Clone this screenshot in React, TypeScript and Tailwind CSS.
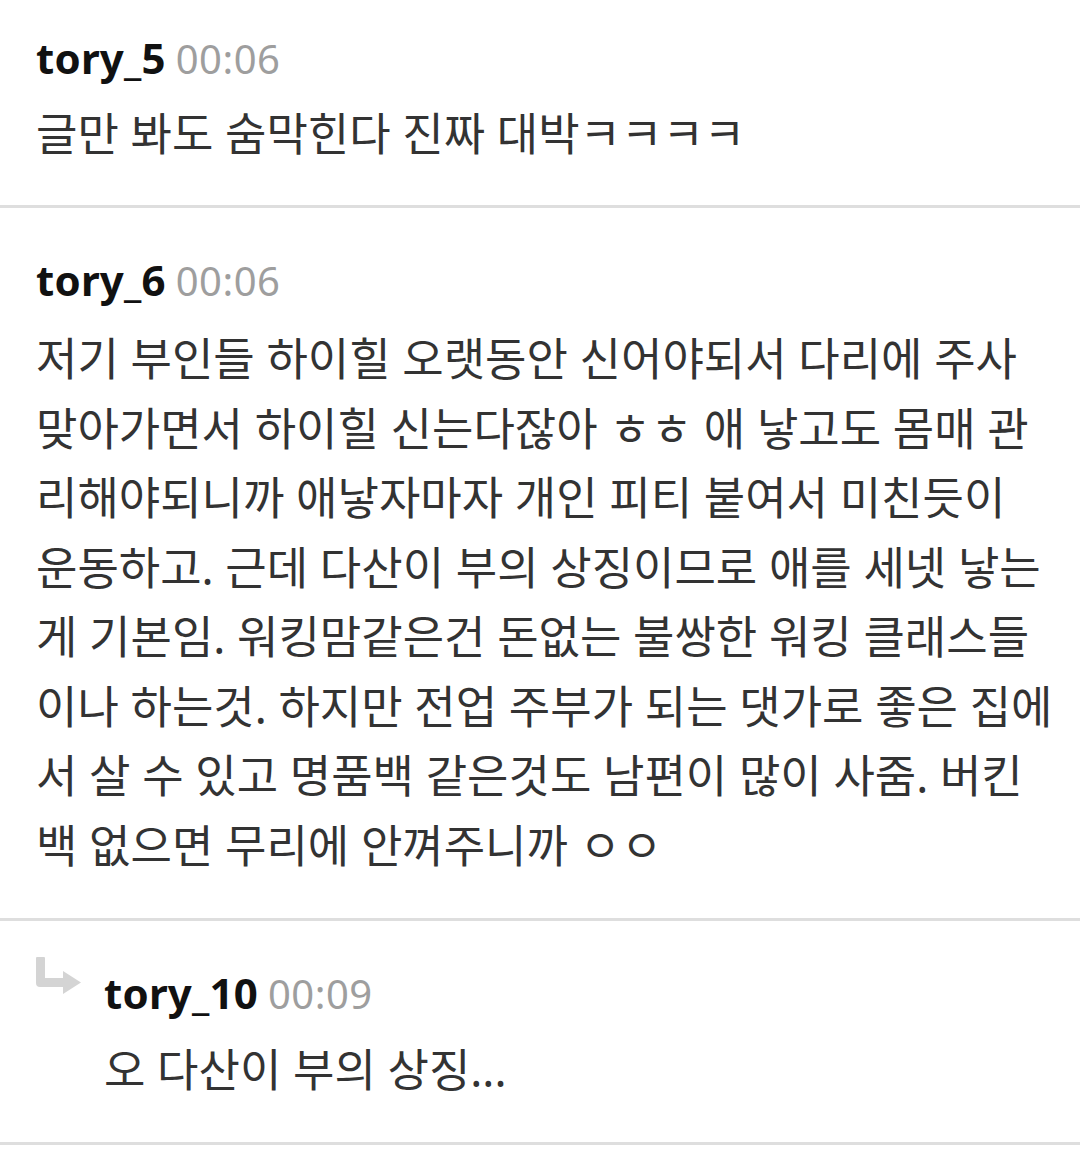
const font = { fontFamily: '"Noto Sans", "Noto Sans CJK KR", sans-serif' };

const longLines = [
  "저기 부인들 하이힐 오랫동안 신어야되서 다리에 주사",
  "맞아가면서 하이힐 신는다잖아 ㅎㅎ 애 낳고도 몸매 관",
  "리해야되니까 애낳자마자 개인 피티 붙여서 미친듯이",
  "운동하고. 근데 다산이 부의 상징이므로 애를 세넷 낳는",
  "게 기본임. 워킹맘같은건 돈없는 불쌍한 워킹 클래스들",
  "이나 하는것. 하지만 전업 주부가 되는 댓가로 좋은 집에",
  "서 살 수 있고 명품백 같은것도 남편이 많이 사줌. 버킨",
  "백 없으면 무리에 안껴주니까 ㅇㅇ",
];

function Header({ name, time }: { name: string; time: string }) {
  return (
    <div className="flex items-baseline gap-[10px] h-[56px] leading-[56px]">
      <span className="text-[42px] font-bold text-[#111] tracking-[0.2px]">{name}</span>
      <span className="text-[40px] text-[#9e9e9e] tracking-[0.5px]">{time}</span>
    </div>
  );
}

function ReplyArrow() {
  return (
    <svg width="46" height="38" viewBox="0 0 46 38" className="shrink-0 mt-[-8px]">
      <path d="M1 0h7a1 1 0 0 1 1 1V21h19v9H4a4 4 0 0 1-4-4V1a1 1 0 0 1 1-1z" fill="#d4d4d4" />
      <path d="M27 14l18 11.5L27 37z" fill="#d4d4d4" />
    </svg>
  );
}

export default function App() {
  return (
    <div className="w-[1080px] min-h-[1149px] bg-white" style={font}>
      <div className="pl-[36px] pt-[30px] pb-[36px] border-b-[3px] border-[#dedede]">
        <Header name="tory_5" time="00:06" />
        <p className="mt-[13px] text-[45px] leading-[70px] text-[#333] whitespace-nowrap">
          글만 봐도 숨막힌다 진짜 대박ㅋㅋㅋㅋ
        </p>
      </div>
      <div className="pl-[36px] pt-[44px] pb-[38px] border-b-[3px] border-[#dedede]">
        <Header name="tory_6" time="00:06" />
        <div className="mt-[16px] text-[45px] leading-[69.5px] text-[#333]">
          {longLines.map((line) => (
            <p key={line} className="whitespace-nowrap">
              {line}
            </p>
          ))}
        </div>
      </div>
      <div className="pl-[36px] pt-[44px] pb-[37px] border-b-[3px] border-[#dedede] flex gap-[22px]">
        <ReplyArrow />
        <div>
          <Header name="tory_10" time="00:09" />
          <p className="mt-[14px] text-[45px] leading-[70px] text-[#333] whitespace-nowrap">
            오 다산이 부의 상징...
          </p>
        </div>
      </div>
    </div>
  );
}
